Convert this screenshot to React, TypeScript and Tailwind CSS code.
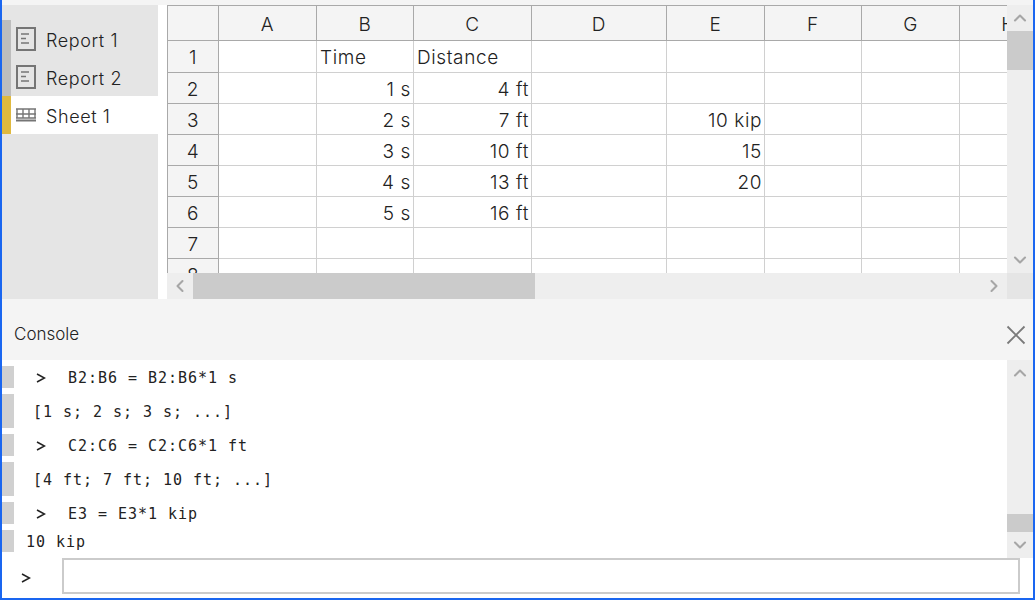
import { ChevronDown, ChevronLeft, ChevronRight, ChevronUp } from "lucide-react";

/* ── Sidebar ───────────────────────────────────────────── */

function ReportIcon() {
	return (
		<svg width="20" height="24" viewBox="0 0 20 24" fill="none" stroke="#757575" className="shrink-0">
			<rect x="1" y="1" width="18" height="22" strokeWidth="2" />
			<path d="M5 7h8M5 11.5h5M5 16h8" strokeWidth="1.3" />
		</svg>
	);
}

function SheetIcon() {
	return (
		<svg width="20" height="14" viewBox="0 0 20 14" fill="none" stroke="#757575" className="shrink-0">
			<path d="M0 1h20M0 6h20M1 1v9M7 1v9M13 1v9M19 1v9M0 10h20" strokeWidth="1.4" />
			<path d="M0 12.5h20" strokeWidth="2" />
		</svg>
	);
}

function SidebarItem({ label, active }: { label: string; active?: boolean }) {
	return (
		<div className={`flex h-[38px] items-center ${active ? "bg-white" : ""}`}>
			<div className={`h-full w-[9px] shrink-0 ${active ? "bg-[#dfb93f]" : "bg-[#bdbdbd]"}`} />
			<div className="flex w-[25px] justify-end">{active ? <SheetIcon /> : <ReportIcon />}</div>
			<span className="ml-[10px] pt-[2px] text-[18px] font-light tracking-[0.6px] text-[#222]">{label}</span>
		</div>
	);
}

function Sidebar() {
	return (
		<div className="w-[156px] shrink-0 bg-[#e5e5e5] pt-[15px]">
			<SidebarItem label="Report 1" />
			<SidebarItem label="Report 2" />
			<SidebarItem label="Sheet 1" active />
		</div>
	);
}

/* ── Spreadsheet ───────────────────────────────────────── */

const colWidths = [51, 98, 97, 118, 135, 98, 97, 98, 98];
const colNames = ["", "A", "B", "C", "D", "E", "F", "G", "H"];
const rowHeights = [32, 31, 31, 31, 31, 31, 31, 31];

const cells: Record<string, { text: string; left?: boolean }> = {
	"1-B": { text: "Time", left: true },
	"1-C": { text: "Distance", left: true },
	"2-B": { text: "1 s" },
	"2-C": { text: "4 ft" },
	"3-B": { text: "2 s" },
	"3-C": { text: "7 ft" },
	"3-E": { text: "10 kip" },
	"4-B": { text: "3 s" },
	"4-C": { text: "10 ft" },
	"4-E": { text: "15" },
	"5-B": { text: "4 s" },
	"5-C": { text: "13 ft" },
	"5-E": { text: "20" },
	"6-B": { text: "5 s" },
	"6-C": { text: "16 ft" },
};

function Grid() {
	return (
		<table className="w-[890px] max-w-none table-fixed border-collapse text-[19px] font-light leading-[24px] tracking-[0.6px] text-[#222]">
			<colgroup>
				{colWidths.map((w, i) => (
					<col key={i} style={{ width: w }} />
				))}
			</colgroup>
			<thead>
				<tr className="h-[35px]">
					{colNames.map((name) => (
						<th key={name} className="overflow-hidden whitespace-nowrap border border-[#a9a9a9] bg-[#f4f4f4] p-0 pt-[3px] text-center font-light">
							{name}
						</th>
					))}
				</tr>
			</thead>
			<tbody>
				{rowHeights.map((h, r) => (
					<tr key={r} style={{ height: h }}>
						<td className="border border-[#a9a9a9] bg-[#f4f4f4] p-0 pt-[3px] text-center">{r + 1}</td>
						{colNames.slice(1).map((name) => {
							const cell = cells[`${r + 1}-${name}`];
							return (
								<td
									key={name}
									className={`overflow-hidden whitespace-nowrap border border-[#d0d0d0] pb-0 pl-[3px] pr-[2px] pt-[3px] ${cell?.left ? "text-left" : "text-right"}`}
								>
									{cell?.text}
								</td>
							);
						})}
					</tr>
				))}
			</tbody>
		</table>
	);
}

function Sheet() {
	return (
		<div className="ml-[9px] flex min-w-0 flex-1 flex-col">
			<div className="flex min-h-0 flex-1">
				<div className="min-w-0 flex-1 overflow-hidden">
					<Grid />
				</div>
				<div className="flex w-[26px] shrink-0 flex-col bg-[#eeeeee]">
					<div className="flex h-[26px] shrink-0 items-center justify-center">
						<ChevronUp size={20} strokeWidth={2.5} className="text-[#a6a6a6]" />
					</div>
					<div className="flex-1">
						<div className="h-[39px] bg-[#cbcbcb]" />
					</div>
					<div className="flex h-[26px] shrink-0 items-center justify-center">
						<ChevronDown size={20} strokeWidth={2.5} className="text-[#a6a6a6]" />
					</div>
				</div>
			</div>
			<div className="flex h-[26px] shrink-0 bg-[#eeeeee]">
				<div className="flex w-[26px] shrink-0 items-center justify-center">
					<ChevronLeft size={20} strokeWidth={2.5} className="text-[#a6a6a6]" />
				</div>
				<div className="w-[342px] bg-[#cbcbcb]" />
				<div className="flex flex-1 items-center justify-end pr-[3px]">
					<ChevronRight size={20} strokeWidth={2.5} className="text-[#a6a6a6]" />
				</div>
				<div className="w-[26px] shrink-0 bg-[#e5e5e5]" />
			</div>
		</div>
	);
}

/* ── Console ───────────────────────────────────────────── */

const consoleRows = [
	{ kind: "in", text: "B2:B6 = B2:B6*1 s" },
	{ kind: "out", text: "[1 s; 2 s; 3 s; ...]" },
	{ kind: "in", text: "C2:C6 = C2:C6*1 ft" },
	{ kind: "out", text: "[4 ft; 7 ft; 10 ft; ...]" },
	{ kind: "in", text: "E3 = E3*1 kip" },
];

function Prompt() {
	return (
		<svg width="10" height="10" viewBox="0 0 10 10" fill="none" stroke="#222" strokeWidth="1.5" className="shrink-0">
			<path d="M1 1l7.5 4L1 9" />
		</svg>
	);
}

function ConsoleRow({ kind, text }: { kind: string; text: string }) {
	const input = kind === "in";
	return (
		<div className={`flex items-center ${input ? "h-[22px]" : "h-[34px]"}`}>
			<div className="h-full w-[12px] shrink-0 bg-[#d0d0d0]" />
			{input ? (
				<div className="ml-[22px] flex items-center gap-[22px] pt-[2px]">
					<Prompt />
					<span>{text}</span>
				</div>
			) : (
				<span className="ml-[19px] pt-[2px]">{text}</span>
			)}
		</div>
	);
}

function Console() {
	return (
		<div className="flex min-h-0 flex-1 flex-col">
			<div className="flex h-[61px] shrink-0 items-center justify-between bg-[#f4f4f4] pl-[12px] pr-[7px] pt-[10px]">
				<span className="text-[17px] font-light text-[#222]">Console</span>
				<svg width="20" height="20" viewBox="0 0 20 20" fill="none" stroke="#7a7a7a" strokeWidth="1.8">
					<path d="M1.5 1.5l17 17M18.5 1.5l-17 17" />
				</svg>
			</div>
			<div className="flex h-[198px] shrink-0">
				<div className="flex min-w-0 flex-1 flex-col gap-[6px] pt-[6px] font-['DejaVu_Sans_Mono',monospace] text-[15px] tracking-[0.97px] text-[#222]">
					{consoleRows.map((row) => (
						<ConsoleRow key={row.text} kind={row.kind} text={row.text} />
					))}
					<div className="flex h-[22px] items-center">
						<div className="h-full w-[12px] shrink-0 bg-[#d0d0d0]" />
						<span className="ml-[12px] pt-[2px]">10 kip</span>
					</div>
				</div>
				<div className="flex w-[26px] shrink-0 flex-col bg-[#eeeeee]">
					<div className="flex h-[26px] shrink-0 items-center justify-center">
						<ChevronUp size={20} strokeWidth={2.5} className="text-[#a6a6a6]" />
					</div>
					<div className="flex flex-1 flex-col justify-end">
						<div className="h-[18px] bg-[#cbcbcb]" />
					</div>
					<div className="flex h-[26px] shrink-0 items-center justify-center">
						<ChevronDown size={20} strokeWidth={2.5} className="text-[#a6a6a6]" />
					</div>
				</div>
			</div>
			<div className="flex flex-1 items-start">
				<div className="ml-[19px] mr-[31px] mt-[15px]">
					<Prompt />
				</div>
				<div className="mr-[13px] h-[36px] min-w-0 flex-1 border-2 border-[#cbcbcb] bg-white" />
			</div>
		</div>
	);
}

export default function App() {
	return (
		<div className="flex h-[600px] w-[1035px] flex-col overflow-hidden border-x-2 border-b-2 border-[#1a66f0] bg-white font-['Inter',sans-serif]">
			<div className="h-[5px] shrink-0 bg-[#f4f4f4]" />
			<div className="flex h-[294px] shrink-0">
				<Sidebar />
				<Sheet />
			</div>
			<Console />
		</div>
	);
}
